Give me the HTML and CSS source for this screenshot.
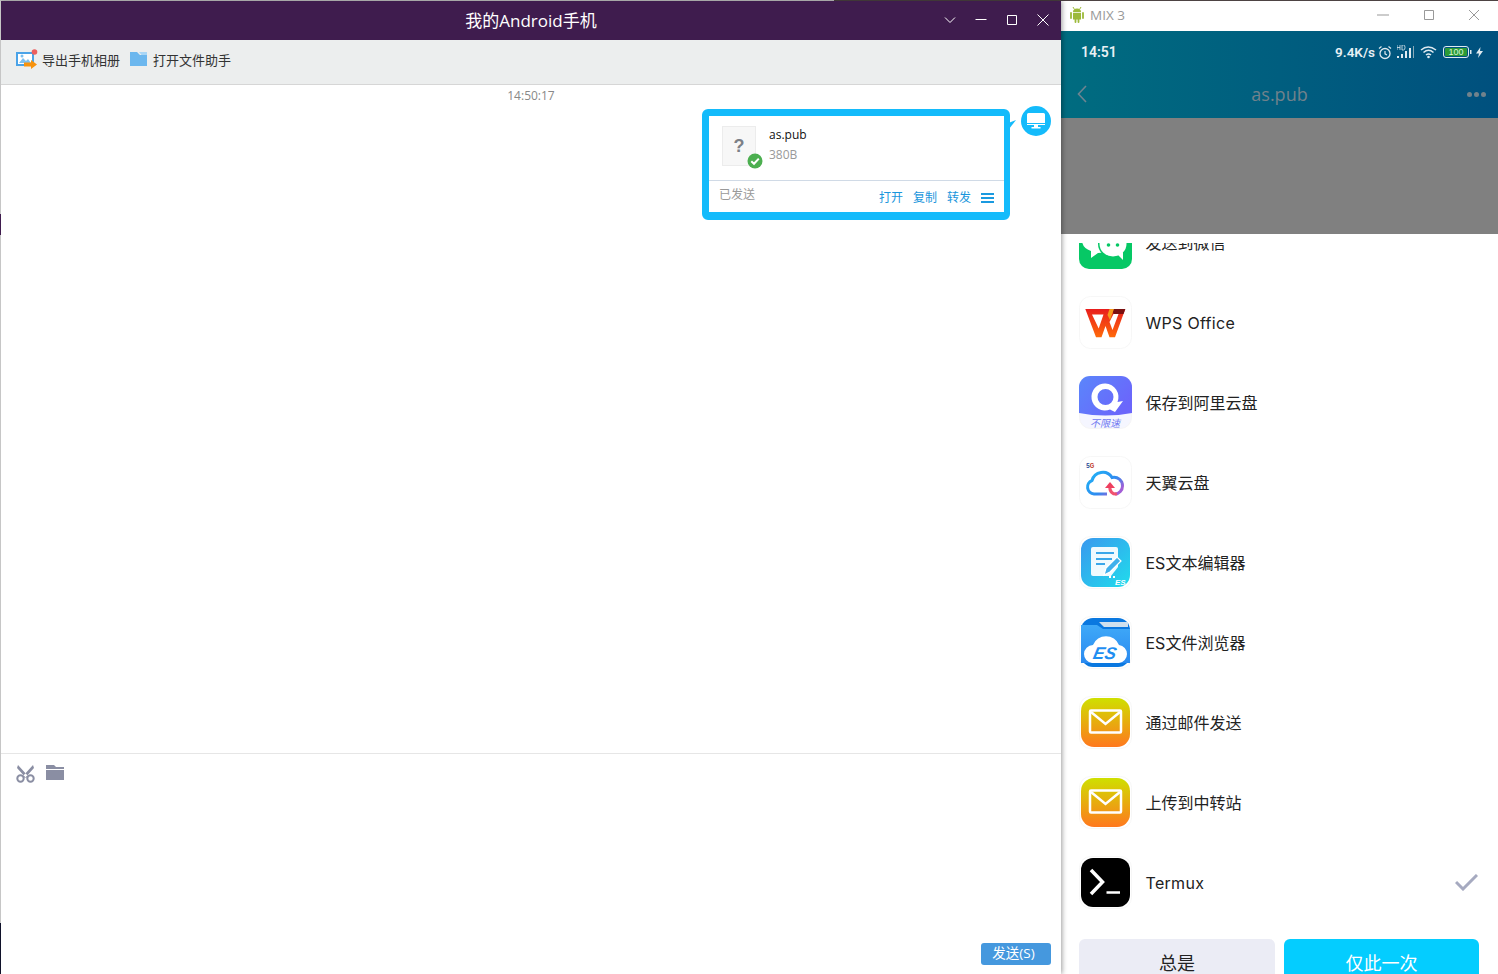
FILE: index.html
```html
<!DOCTYPE html>
<html lang="en">
<head>
    <meta charset="UTF-8">
    <title>我的Android手机</title>
    <link rel="stylesheet" href="styles.css">
</head>
<body>
<div class="desktop">
    <section class="chat-win">
        <header class="chat-title">
            <h1>我的Android手机</h1>
            <div class="win-btns">
                <svg width="14" height="14" viewBox="0 0 14 14"><path d="M2 4.500 7 9.500 12 4.500" fill="none" stroke="#fff"/></svg>
                <svg width="14" height="14" viewBox="0 0 14 14"><path d="M1.500 6.500H12.500" fill="none" stroke="#fff"/></svg>
                <svg width="14" height="14" viewBox="0 0 14 14"><path d="M2.500 2.500H11.500V11.500H2.500Z" fill="none" stroke="#fff"/></svg>
                <svg width="14" height="14" viewBox="0 0 14 14"><path d="M1.500 1.500 12.500 12.500M12.500 1.500 1.500 12.500" fill="none" stroke="#fff"/></svg>
            </div>
        </header>

        <nav class="toolbar">
            <a class="tool">
                <svg width="22" height="20" viewBox="0 0 22 20">
                    <path d="M1 4H17V16H1Z" fill="#fff" stroke="#4aa3e8" stroke-width="2"/>
                    <path d="M3 14 7 9 10 12 12 10 15 14Z" fill="#7cc0f0"/>
                    <circle cx="6" cy="7" r="1.500" fill="#7cc0f0"/>
                    <circle cx="18.500" cy="3" r="2.800" fill="#ec5f5f"/>
                    <path d="M8 13.500H15V11L21 15.500 15 20V17.500H8Z" fill="#f7930e"/>
                </svg>
                导出手机相册
            </a>
            <a class="tool">
                <svg width="17" height="14" viewBox="0 0 17 14"><path d="M0 0H7L10 3H17V14H0Z" fill="#6cb7ee"/><path d="M9 0H17V3H11.500Z" fill="#a9d6f6"/></svg>
                打开文件助手
            </a>
        </nav>

        <main class="messages">
            <p class="time">14:50:17</p>
            <div class="msg-row">
                <div class="bubble">
                    <div class="file-info">
                        <div class="file-icon">?
                            <svg class="file-ok" width="16" height="16" viewBox="0 0 16 16"><circle cx="8" cy="8" r="7.500" fill="#4caf50"/><path d="M4.300 8.200 7 10.800 11.800 5.600" fill="none" stroke="#fff" stroke-width="2"/></svg>
                        </div>
                        <div>
                            <div class="file-name">as.pub</div>
                            <div class="file-size">380B</div>
                        </div>
                    </div>
                    <div class="bubble-foot">
                        <span class="sent">已发送</span>
                        <div class="actions">
                            <a>打开</a><a>复制</a><a>转发</a>
                            <span class="menu-icon"></span>
                        </div>
                    </div>
                </div>
                <div class="avatar">
                    <svg width="18" height="16" viewBox="0 0 18 16"><path d="M1.500 0H16.500A1.500 1.500 0 0 1 18 1.500V10H0V1.500A1.500 1.500 0 0 1 1.500 0Z" fill="#fff"/><path d="M0 11H18V12H11V14H13.500V15.500H4.500V14H7V12H0Z" fill="#fff"/></svg>
                </div>
            </div>
        </main>

        <footer class="compose">
            <div class="compose-tools">
                <svg width="19" height="18" viewBox="0 0 19 18">
                    <g fill="none" stroke="#8a8ea3" stroke-width="2">
                        <circle cx="4.500" cy="13.500" r="3.200"/><circle cx="14.500" cy="13.500" r="3.200"/>
                    </g>
                    <path d="M2 0 12 11 10 13 1 3ZM17 0 7 11 9 13 18 3Z" fill="#8a8ea3"/>
                </svg>
                <svg width="18" height="15" viewBox="0 0 18 15"><path d="M0 0H8L10 2H18V4H0ZM0 5H18V15H0Z" fill="#8a8ea3"/></svg>
            </div>
            <button class="send">发送(S)</button>
        </footer>
    </section>

    <section class="phone-win">
        <header class="phone-title">
            <svg width="14" height="17" viewBox="0 0 14 17">
                <path d="M3 1 4.500 3.500M11 1 9.500 3.500" stroke="#9cba3a" fill="none"/>
                <path d="M3 6A4 3.500 0 0 1 11 6ZM3 6.800H11V13.500H3Z" fill="#9cba3a"/>
                <path d="M1 7V12M13 7V12M5.500 13V16M8.500 13V16" stroke="#9cba3a" stroke-width="1.800" stroke-linecap="round" fill="none"/>
            </svg>
            <span class="phone-name">MIX 3</span>
            <div class="phone-btns">
                <svg width="14" height="14" viewBox="0 0 14 14"><path d="M1 7H13" fill="none" stroke="#999"/></svg>
                <svg width="14" height="14" viewBox="0 0 14 14"><path d="M2.500 2.500H11.500V11.500H2.500Z" fill="none" stroke="#999"/></svg>
                <svg width="14" height="14" viewBox="0 0 14 14"><path d="M2 2 12 12M12 2 2 12" fill="none" stroke="#999"/></svg>
            </div>
        </header>

        <div class="phone-top">
            <div class="status">
                <span class="clock">14:51</span>
                <div class="status-right">
                    <span class="speed">9.4K/s</span>
                    <svg width="14" height="15" viewBox="0 0 14 15"><circle cx="7" cy="8.500" r="5" fill="none" stroke="#dfeaf0" stroke-width="1.300"/><path d="M7 6V8.800L9 10M1 3.500 3.500 1.500M13 3.500 10.500 1.500" fill="none" stroke="#dfeaf0" stroke-width="1.200"/></svg>
                    <svg class="st-signal" width="17" height="14" viewBox="0 0 17 14"><path d="M0 11H2V13H0ZM4 9H6V13H4ZM8 6H10V13H8ZM12 3H14V13H12Z" fill="#dfeaf0"/><path d="M16 1H17V13H16Z" fill="#8aa9b8"/><path d="M0 0V5M3 0V5M0 2.500H3M5 0V5H6.500Q8 5 8 2.500 8 0 6.500 0Z" fill="none" stroke="#dfeaf0" stroke-width=".8"/></svg>
                    <svg class="st-wifi" width="18" height="14" viewBox="0 0 18 14"><path d="M1 5Q8 -1 16 5M3.500 7.500Q8.500 3 13.500 7.500M6 10Q8.500 8 11 10" fill="none" stroke="#dfeaf0" stroke-width="1.500"/><circle cx="8.500" cy="12" r="1.300" fill="#dfeaf0"/></svg>
                    <svg class="st-batt" width="29" height="12" viewBox="0 0 29 12">
                        <rect x=".5" y=".5" width="25" height="11" rx="2.500" fill="none" stroke="#dfeaf0"/>
                        <rect x="2" y="2" width="22" height="8" rx="1" fill="#2c9a36"/>
                        <path d="M27 4H28.500V8H27Z" fill="#dfeaf0"/>
                        <text x="13" y="9.200" text-anchor="middle" class="batt-num">100</text>
                    </svg>
                    <svg width="7" height="11" viewBox="0 0 7 11"><path d="M4.500 0 0 6.500H3L2 11 7 4H4Z" fill="#dfeaf0"/></svg>
                </div>
            </div>
            <div class="app-nav">
                <svg width="10" height="18" viewBox="0 0 10 18"><path d="M9 1 1.500 9 9 17" fill="none" stroke="#6e8490" stroke-width="1.600"/></svg>
                <span class="app-title">as.pub</span>
                <div class="dots"><i></i><i></i><i></i></div>
            </div>
        </div>

        <div class="scrim"></div>

        <div class="sheet">
            <ul class="apps">
                <li class="app">
                    <svg class="app-icon" viewBox="0 0 53 53">
                        <rect width="53" height="53" rx="10" fill="#06c865"/>
                        <path d="M3 24 Q3 10 19 10 Q35 10 35 24 Q35 37 19 37 L12 42 L12 35 Q3 32 3 24Z" fill="#fff"/>
                        <ellipse cx="34" cy="28" rx="15" ry="14" fill="#06c865"/>
                        <ellipse cx="34" cy="28" rx="13.500" ry="12.500" fill="#fff"/>
                        <path d="M38 38 44 44 44 36Z" fill="#fff"/>
                        <circle cx="29.500" cy="29" r="1.800" fill="#06c865"/><circle cx="38.500" cy="29" r="1.800" fill="#06c865"/>
                    </svg>
                    <span>发送到微信</span>
                </li>
                <li class="app">
                    <svg class="app-icon" viewBox="0 0 53 53">
                        <defs><linearGradient id="wps" x1="0" y1="0" x2="0" y2="1"><stop offset="0" stop-color="#e81d1d"/><stop offset="1" stop-color="#ff6a0a"/></linearGradient></defs>
                        <rect x=".5" y=".5" width="52" height="52" rx="11" fill="#fff" stroke="#f7f7f7"/>
                        <path fill-rule="evenodd" d="M6.300 13H46.300L36 41.300H30.500L26.500 30 22.500 41.300H17ZM13 18.500H24.500L19.700 32.500ZM39.500 18H34.500L30.500 26 33.500 34Z" fill="url(#wps)"/>
                        <path d="M33 13H46.300L44.500 18H34.500Z" fill="#7a1010"/>
                        <path d="M30.500 13H35L31 24 28.500 19Z" fill="#f59a1b"/>
                    </svg>
                    <span class="app-latin">WPS Office</span>
                </li>
                <li class="app">
                    <svg class="app-icon" viewBox="0 0 53 53">
                        <defs><linearGradient id="ali" x1="0" y1="0" x2="1" y2=".6"><stop offset="0" stop-color="#5a86fb"/><stop offset="1" stop-color="#6b66fb"/></linearGradient></defs>
                        <rect x=".5" y=".5" width="52" height="52" rx="11" fill="#f5f6ff" stroke="#f5f5f5"/>
                        <path d="M0 11A11 11 0 0 1 11 0H42A11 11 0 0 1 53 11V37Q26 42 0 37Z" fill="url(#ali)"/>
                        <path d="M26.500 7.500A13.500 13.500 0 1 0 31 33.500L36 36 44 25 38.500 26A13.500 13.500 0 0 0 26.500 7.500ZM26.500 13A8 8 0 1 1 26.500 29 8 8 0 1 1 26.500 13Z" fill="#fff"/>
                        <text x="26" y="51" text-anchor="middle" class="ali-txt">不限速</text>
                    </svg>
                    <span>保存到阿里云盘</span>
                </li>
                <li class="app">
                    <svg class="app-icon" viewBox="0 0 53 53">
                        <defs><linearGradient id="tianyi" x1="0" y1="0" x2="1" y2=".7"><stop offset="0" stop-color="#1fb6f6"/><stop offset=".65" stop-color="#2e8cf0"/><stop offset="1" stop-color="#a35fd6"/></linearGradient></defs>
                        <rect x=".5" y=".5" width="52" height="52" rx="11" fill="#fff" stroke="#f7f7f7"/>
                        <path d="M28 38H15A7 7 0 0 1 13 24.500 11 11 0 0 1 33 21.500 8.500 8.500 0 0 1 43.500 30 8 8 0 0 1 36 38" fill="none" stroke="url(#tianyi)" stroke-width="3"/>
                        <path d="M31 31A6 6 0 0 0 38 38" fill="none" stroke="#f0526f" stroke-width="3"/>
                        <path d="M26 32 31 26 36 32Z" fill="#ee3f5f"/>
                        <text x="7" y="12" class="tianyi-5g">5<tspan class="tianyi-g">G</tspan></text>
                    </svg>
                    <span>天翼云盘</span>
                </li>
                <li class="app">
                    <svg class="app-icon" viewBox="0 0 53 53">
                        <defs><linearGradient id="esedit" x1="0" y1="0" x2="1" y2="1"><stop offset="0" stop-color="#3a98ee"/><stop offset="1" stop-color="#20dcec"/></linearGradient></defs>
                        <rect x=".5" y=".5" width="52" height="52" rx="11" fill="#fff" stroke="#f7f7f7"/>
                        <rect x="2" y="2" width="49" height="49" rx="12" fill="url(#esedit)"/>
                        <path d="M14 11H37A2 2 0 0 1 39 13V31L32 40H14A2 2 0 0 1 12 38V13A2 2 0 0 1 14 11Z" fill="#fff" opacity=".93"/>
                        <path d="M17 17H35M17 23H33M17 28H26" stroke="#3aa7ea" stroke-width="2" fill="none"/>
                        <path d="M25 39 27 32 38 21 42 25 31 36Z" fill="#3fb0ec" stroke="#fff" stroke-width="1.200"/>
                        <path d="M30 41H36" stroke="#fff" stroke-width="2" stroke-dasharray="2 2"/>
                        <text x="36" y="48.500" class="es-small">ES</text>
                    </svg>
                    <span>ES文本编辑器</span>
                </li>
                <li class="app">
                    <svg class="app-icon" viewBox="0 0 53 53">
                        <defs><linearGradient id="esfile" x1="0" y1="0" x2="0" y2="1"><stop offset="0" stop-color="#3fa9f8"/><stop offset="1" stop-color="#2a8af0"/></linearGradient></defs>
                        <rect x=".5" y=".5" width="52" height="52" rx="11" fill="#fff" stroke="#f7f7f7"/>
                        <rect x="2" y="2" width="49" height="49" rx="12" fill="#0a78e0"/>
                        <path d="M4 6H20L25 11H49V6H4Z" fill="#cfe0ee"/>
                        <path d="M2 9H18L24 13H51V47H2Z" fill="url(#esfile)"/>
                        <path d="M13 47A9 9 0 0 1 5 38 9 9 0 0 1 14 29 14 14 0 0 1 40 29 9 9 0 0 1 48 38 9 9 0 0 1 40 47Z" fill="#fff"/>
                        <text x="14.500" y="43" class="es-big" transform="translate(8 0) skewX(-12)">ES</text>
                    </svg>
                    <span>ES文件浏览器</span>
                </li>
                <li class="app">
                    <svg class="app-icon" viewBox="0 0 53 53">
                        <defs><linearGradient id="mail1" x1="0" y1="0" x2="0" y2="1"><stop offset="0" stop-color="#cfe000"/><stop offset="1" stop-color="#ff781e"/></linearGradient></defs>
                        <rect x=".5" y=".5" width="52" height="52" rx="11" fill="#fff" stroke="#f7f7f7"/>
                        <rect x="2" y="2" width="49" height="49" rx="13" fill="url(#mail1)"/>
                        <rect x="11" y="14.500" width="31" height="22" rx="1" fill="none" stroke="#fff" stroke-width="2.500"/>
                        <path d="M12 16 26.500 28 41 16" fill="none" stroke="#fff" stroke-width="2.500"/>
                    </svg>
                    <span>通过邮件发送</span>
                </li>
                <li class="app">
                    <svg class="app-icon" viewBox="0 0 53 53">
                        <defs><linearGradient id="mail2" x1="0" y1="0" x2="0" y2="1"><stop offset="0" stop-color="#cfe000"/><stop offset="1" stop-color="#ff781e"/></linearGradient></defs>
                        <rect x=".5" y=".5" width="52" height="52" rx="11" fill="#fff" stroke="#f7f7f7"/>
                        <rect x="2" y="2" width="49" height="49" rx="13" fill="url(#mail2)"/>
                        <rect x="11" y="14.500" width="31" height="22" rx="1" fill="none" stroke="#fff" stroke-width="2.500"/>
                        <path d="M12 16 26.500 28 41 16" fill="none" stroke="#fff" stroke-width="2.500"/>
                    </svg>
                    <span>上传到中转站</span>
                </li>
                <li class="app">
                    <svg class="app-icon" viewBox="0 0 53 53">
                        <rect x=".5" y=".5" width="52" height="52" rx="11" fill="#fff" stroke="#f7f7f7"/>
                        <rect x="2" y="2" width="49" height="49" rx="12" fill="#000"/>
                        <path d="M12 14 23.500 26 12 38" fill="none" stroke="#fff" stroke-width="3.500"/>
                        <path d="M27.500 36.500H41" fill="none" stroke="#fff" stroke-width="2.500"/>
                    </svg>
                    <span class="app-latin">Termux</span>
                    <svg class="app-check" width="23" height="17" viewBox="0 0 23 17"><path d="M1 8 8 15 22 1" fill="none" stroke="#a6aac0" stroke-width="3"/></svg>
                </li>
            </ul>
            <div class="sheet-btns">
                <button class="btn-always">总是</button>
                <button class="btn-once">仅此一次</button>
            </div>
        </div>
    </section>
</div>
</body>
</html>
```

FILE: styles.css
```css
* {
    box-sizing: border-box;
    margin: 0;
    padding: 0;
}

html, body {
    height: 100%;
    overflow: hidden;
}

body {
    background: linear-gradient(90deg, #c9c9c9 834px, #4d4343 834px);
    font-family: "Open Sans", "Noto Sans CJK SC", sans-serif;
    padding-top: 1px;
}

svg {
    display: block;
    flex-shrink: 0;
}

.desktop {
    display: flex;
    height: 973px;
}

/* left window */
.chat-win {
    width: 1061px;
    display: flex;
    flex-direction: column;
    background: #fff;
    border-left: 1px solid #c6c6c6;
    border-image: linear-gradient(180deg, #c6c6c6 214px, #3f1c4e 214px, #3f1c4e 235px, #c6c6c6 235px, #c6c6c6 921px, #10122a 921px) 1;
    position: relative;
    z-index: 1;
    box-shadow: 1px 0 5px rgba(0, 0, 0, .4);
}

.chat-title {
    height: 39px;
    flex-shrink: 0;
    background: #3f1c4e;
    position: relative;
    display: flex;
    align-items: center;
    justify-content: center;
    padding-bottom: 3px;
}

.chat-title h1 {
    font-size: 17px;
    font-weight: 400;
    color: #fff;
}

.win-btns {
    position: absolute;
    right: 11px;
    top: 12px;
    display: flex;
    gap: 17px;
}

.toolbar {
    height: 45px;
    flex-shrink: 0;
    background: #eceeee;
    border-bottom: 1px solid #d6d6d6;
    display: flex;
    align-items: center;
    padding: 0 0 6px 15px;
    gap: 10px;
}

.tool {
    display: flex;
    align-items: center;
    gap: 4px;
    font-size: 13px;
    color: #333;
}

.tool + .tool {
    gap: 6px;
}

.messages {
    flex: 1;
    padding-right: 10px;
}

.time {
    text-align: center;
    font-size: 12px;
    line-height: 22px;
    color: #888;
    height: 24px;
    margin-left: 10px;
}

.msg-row {
    display: flex;
    justify-content: flex-end;
    gap: 11px;
}

.bubble {
    width: 308px;
    height: 111px;
    border: 7px solid #14bbfb;
    border-right-width: 6px;
    border-bottom-width: 8px;
    border-radius: 6px;
    background: #fff;
    position: relative;
}

.bubble::after {
    content: "";
    position: absolute;
    right: -12px;
    top: 4px;
    width: 7px;
    height: 9px;
    background: #14bbfb;
    clip-path: polygon(100% 0, 0 100%, 0 30%);
}

.file-info {
    height: 65px;
    display: flex;
    gap: 13px;
    padding: 10px 0 0 13px;
    border-bottom: 1px solid #d0dae6;
}

.file-icon {
    width: 34px;
    height: 40px;
    background: #f7f7f7;
    border: 1px solid #ececec;
    color: #7c8087;
    font-family: "Liberation Sans", sans-serif;
    font-size: 18px;
    font-weight: 700;
    line-height: 38px;
    text-align: center;
    position: relative;
}

.file-ok {
    position: absolute;
    right: -8px;
    bottom: -4px;
}

.file-name {
    font-size: 12px;
    line-height: 18px;
    color: #111;
}

.file-size {
    font-size: 12px;
    line-height: 18px;
    margin-top: 2px;
    color: #999;
}

.bubble-foot {
    display: flex;
    justify-content: space-between;
    padding: 5px 10px 0 10px;
}

.sent {
    font-size: 12px;
    line-height: 18px;
    color: #999;
}

.actions {
    display: flex;
    align-items: center;
    gap: 10px;
    font-size: 12px;
    line-height: 18px;
    color: #1a96dc;
    padding-top: 3px;
}

.menu-icon {
    width: 13px;
    height: 10px;
    border-top: 2px solid #1a9ae0;
    border-bottom: 2px solid #1a9ae0;
    position: relative;
}

.menu-icon::after {
    content: "";
    position: absolute;
    left: 0;
    right: 0;
    top: 2px;
    height: 2px;
    background: #1a9ae0;
}

.avatar {
    width: 30px;
    height: 30px;
    margin-top: -3px;
    border-radius: 50%;
    background: #14bbfb;
    display: flex;
    align-items: center;
    justify-content: center;
}

.compose {
    height: 221px;
    flex-shrink: 0;
    border-top: 1px solid #e6e6e6;
    padding: 11px 10px 9px 15px;
    display: flex;
    flex-direction: column;
    justify-content: space-between;
}

.compose-tools {
    display: flex;
    gap: 11px;
}

.send {
    align-self: flex-end;
    width: 70px;
    height: 22px;
    border: 0;
    border-radius: 3px;
    background: #4598de;
    color: #fff;
    font-family: inherit;
    font-size: 13.500px;
    line-height: 20px;
    padding: 0 5px 3px 0;
}

/* right window */
.phone-win {
    flex: 1;
    display: flex;
    flex-direction: column;
    background: #fff;
    font-family: "Inter", "Noto Sans CJK SC", sans-serif;
    min-width: 0;
}

.phone-title {
    height: 30px;
    flex-shrink: 0;
    display: flex;
    align-items: center;
    padding: 0 0 3px 9px;
    gap: 6px;
    position: relative;
}

.phone-name {
    font-size: 13.500px;
    color: #999;
    font-family: "Open Sans", sans-serif;
}

.phone-btns {
    position: absolute;
    right: 17px;
    top: 7px;
    display: flex;
    gap: 31.500px;
}

.phone-top {
    height: 87px;
    flex-shrink: 0;
    background: linear-gradient(90deg, #006c80, #00507e);
    padding: 0 12px 0 20px;
}

.status {
    height: 42px;
    margin-bottom: 1px;
    display: flex;
    align-items: center;
    justify-content: space-between;
    color: #e8f0f4;
    font-weight: 600;
    font-family: "Roboto", sans-serif;
}

.clock {
    font-size: 14px;
}

.status-right {
    display: flex;
    align-items: center;
    gap: 4px;
    padding-right: 3px;
}

.speed {
    font-size: 13.500px;
    margin-right: -1px;
}

.st-signal {
    margin-left: 1px;
}

.st-wifi {
    margin-left: 2px;
}

.st-batt {
    margin-left: 1px;
}

.batt-num {
    font-family: "Liberation Sans", sans-serif;
    font-size: 9px;
    font-weight: 400;
    fill: #d9f5d9;
}

.app-nav {
    display: flex;
    align-items: center;
    justify-content: space-between;
    height: 40px;
    margin-left: -4px;
    position: relative;
}

.app-title {
    position: absolute;
    left: 0;
    right: 4px;
    text-align: center;
    font-family: "Open Sans", sans-serif;
    font-size: 18px;
    color: #71828c;
}

.dots {
    display: flex;
    gap: 2px;
}

.dots i {
    width: 5px;
    height: 5px;
    border-radius: 50%;
    background: #71828c;
}

.scrim {
    height: 116px;
    flex-shrink: 0;
    background: #808080;
}

.sheet {
    flex: 1;
    padding: 9px 18px 0;
    min-height: 0;
    background: #fff;
}

.apps {
    list-style: none;
    height: 696px;
    overflow: hidden;
}

.app {
    height: 80px;
    display: flex;
    align-items: center;
    gap: 13.500px;
    font-size: 16px;
    color: #222;
}

.app:first-child {
    margin-top: -41px;
}

.app-latin {
    padding-top: 2px;
    letter-spacing: .3px;
}

.app-icon {
    width: 53px;
    height: 53px;
}

.app-check {
    margin-left: auto;
    margin-right: 2px;
}

.ali-txt {
    font-size: 10px;
    font-style: italic;
    fill: #6f78f0;
}

.tianyi-5g {
    font-size: 6px;
    font-weight: 700;
    fill: #2a4a9a;
}

.tianyi-g {
    fill: #c0392b;
}

.es-small {
    font-family: "Liberation Sans", sans-serif;
    font-size: 8px;
    font-style: italic;
    font-weight: 700;
    fill: #fff;
}

.es-big {
    font-family: "Liberation Sans", sans-serif;
    font-size: 17px;
    font-style: italic;
    font-weight: 700;
    fill: #1f8ef1;
}

.sheet-btns {
    display: grid;
    grid-template-columns: 196px 195px;
    gap: 9px;
}

.sheet-btns button {
    height: 46px;
    border: 0;
    border-radius: 6px;
    font-family: inherit;
    font-size: 18px;
}

.btn-always {
    background: #ebecf5;
    color: #222;
}

.btn-once {
    background: #04cdff;
    color: #fff;
}
```
